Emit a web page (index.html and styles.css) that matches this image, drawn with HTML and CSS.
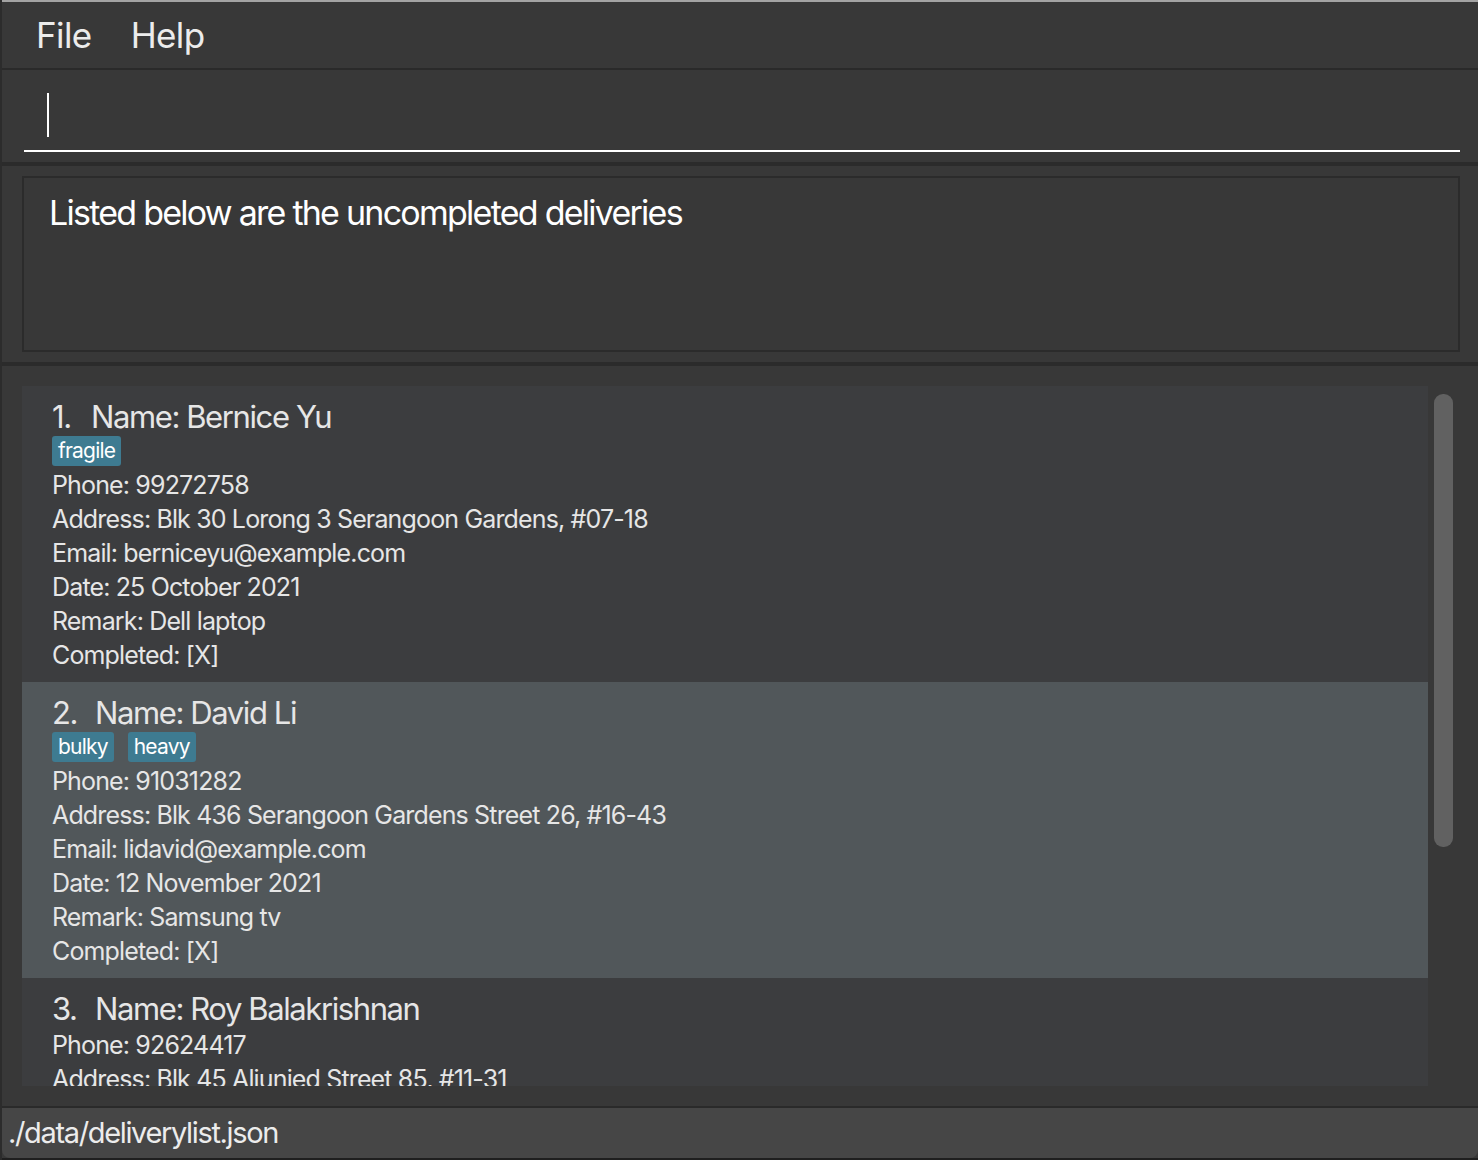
FILE: index.html
```html
<!DOCTYPE html>
<html lang="en">
<head>
<meta charset="utf-8">
<title>Delivery list</title>
<link rel="stylesheet" href="styles.css">
</head>
<body>
<div class="window">
  <div class="topline"></div>
  <div class="menubar">
    <span class="menu-item">File</span>
    <span class="menu-item">Help</span>
  </div>
  <div class="sep2"></div>
  <div class="command">
    <div class="command-field"><span class="caret"></span></div>
  </div>
  <div class="sep4"></div>
  <div class="result">
    <div class="result-box">Listed below are the uncompleted deliveries</div>
  </div>
  <div class="sep4"></div>
  <div class="listpane">
    <div class="viewport">
      <div class="card">
        <div class="name-row"><span class="idx">1.</span><span>Name: Bernice Yu</span></div>
        <div class="tags"><span class="tag">fragile</span></div>
        <div class="line">Phone: 99272758</div>
        <div class="line">Address: Blk 30 Lorong 3 Serangoon Gardens, #07-18</div>
        <div class="line">Email: berniceyu@example.com</div>
        <div class="line">Date: 25 October 2021</div>
        <div class="line">Remark: Dell laptop</div>
        <div class="line">Completed: [X]</div>
      </div>
      <div class="card selected">
        <div class="name-row"><span class="idx wide">2.</span><span>Name: David Li</span></div>
        <div class="tags"><span class="tag">bulky</span><span class="tag">heavy</span></div>
        <div class="line">Phone: 91031282</div>
        <div class="line">Address: Blk 436 Serangoon Gardens Street 26, #16-43</div>
        <div class="line">Email: lidavid@example.com</div>
        <div class="line">Date: 12 November 2021</div>
        <div class="line">Remark: Samsung tv</div>
        <div class="line">Completed: [X]</div>
      </div>
      <div class="card">
        <div class="name-row"><span class="idx wide">3.</span><span>Name: Roy Balakrishnan</span></div>
        <div class="line">Phone: 92624417</div>
        <div class="line">Address: Blk 45 Aljunied Street 85, #11-31</div>
      </div>
    </div>
    <div class="scrolltrack"><div class="thumb"></div></div>
  </div>
  <div class="sep2"></div>
  <div class="status">./data/deliverylist.json</div>
  <div class="bottomline"></div>
</div>
</body>
</html>
```
FILE: styles.css
```css
html, body {
  margin: 0;
  padding: 0;
  background: #383838;
}
body {
  font-family: Inter, "Open Sans", "Liberation Sans", sans-serif;
  color: #e6e6e6;
}
.window {
  width: 1478px;
  height: 1160px;
  display: flex;
  flex-direction: column;
  background: #383838;
  border-left: 2px solid #2c2c2c;
  box-sizing: border-box;
  overflow: hidden;
}
.topline {
  height: 2px;
  background: #a3a3a3;
}
.menubar {
  height: 66px;
  display: flex;
  align-items: center;
  gap: 39px;
  padding-left: 34px;
  font-size: 35px;
  letter-spacing: -0.6px;
  color: #ececec;
}
.sep2 {
  height: 2px;
  background: #2a2a2a;
}
.sep4 {
  height: 4px;
  background: #2b2b2b;
}
.command {
  height: 92px;
  padding: 0 18px 0 22px;
  display: flex;
  flex-direction: column;
}
.command-field {
  flex: 1;
  border-bottom: 2px solid #ffffff;
  margin-bottom: 10px;
  padding-left: 23px;
  padding-top: 23px;
}
.caret {
  display: block;
  width: 2px;
  height: 44px;
  background: #ffffff;
}
.result {
  height: 196px;
  padding: 10px 18px 10px 20px;
  box-sizing: border-box;
}
.result-box {
  height: 176px;
  box-sizing: border-box;
  border: 2px solid #2b2b2b;
  padding: 14px 0 0 25px;
  font-size: 34px;
  letter-spacing: -1.75px;
  color: #ffffff;
}
.listpane {
  height: 740px;
  box-sizing: border-box;
  padding: 20px 0 20px 20px;
  display: flex;
  gap: 6px;
}
.viewport {
  width: 1406px;
  height: 700px;
  overflow: hidden;
}
.card {
  height: 296px;
  box-sizing: border-box;
  padding: 12px 0 10px 30px;
  background: #3c3d3f;
}
.card.selected {
  background: #51575a;
}
.name-row {
  height: 38px;
  line-height: 38px;
  font-size: 31px;
  letter-spacing: -1.4px;
  display: flex;
}
.idx {
  width: 39px;
}
.idx.wide {
  width: 43px;
}
.tags {
  height: 32px;
  display: flex;
  gap: 14px;
}
.tag {
  height: 30px;
  line-height: 30px;
  padding: 0 6px;
  border-radius: 3px;
  background: #3e7b91;
  color: #ffffff;
  font-size: 21px;
  letter-spacing: -0.8px;
}
.line {
  height: 34px;
  line-height: 34px;
  font-size: 25px;
  letter-spacing: -0.85px;
}
.scrolltrack {
  width: 19px;
  padding-top: 8px;
}
.thumb {
  height: 453px;
  border-radius: 9px;
  background: #616161;
}
.status {
  height: 50px;
  line-height: 50px;
  background: #464646;
  padding-left: 6px;
  font-size: 29px;
  letter-spacing: -1.35px;
  color: #ececec;
  border-bottom-left-radius: 8px;
  border-bottom-right-radius: 8px;
}
.bottomline {
  height: 2px;
  background: #1f1f1f;
}
```
